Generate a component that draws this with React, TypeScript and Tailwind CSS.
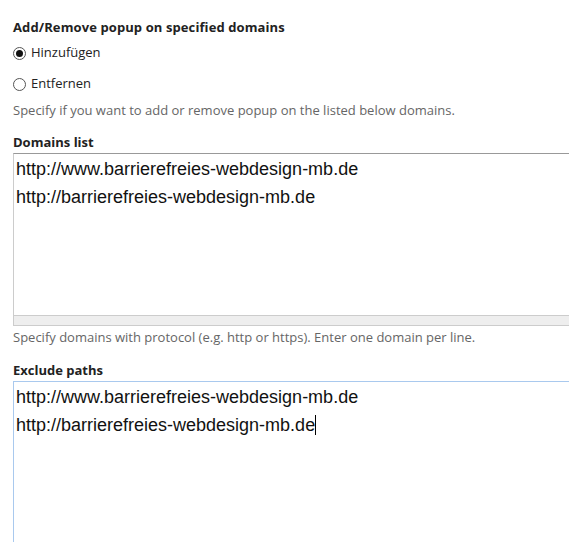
const lines = [
  "http://www.barrierefreies-webdesign-mb.de",
  "http://barrierefreies-webdesign-mb.de",
];

const Radio = ({ label, checked }: { label: string; checked?: boolean }) => {
  return (
    <label className="flex items-center gap-[5px] h-[18px]">
      <span className="w-[13px] h-[13px] rounded-full border border-[#555] bg-white flex items-center justify-center">
        {checked && <span className="w-[7px] h-[7px] rounded-full bg-[#111]" />}
      </span>
      <span className="text-[13px] text-[#222]">{label}</span>
    </label>
  );
};

const App = () => {
  return (
    <div
      className="w-[569px] h-[542px] overflow-hidden bg-white px-[13px]"
      style={{ fontFamily: '"Open Sans", "Noto Sans", sans-serif' }}
    >
      {/* popup domains */}
      <div className="pt-[18px] flex flex-col items-start">
        <h3 className="text-[13px] leading-[18px] font-bold text-[#222] tracking-[0.1px]">
          Add/Remove popup on specified domains
        </h3>
        <div className="mt-[8px] flex flex-col gap-[13px]">
          <Radio label="Hinzufügen" checked />
          <Radio label="Entfernen" />
        </div>
        <p className="mt-[8px] text-[13px] leading-[18px] text-[#666]">
          Specify if you want to add or remove popup on the listed below domains.
        </p>
      </div>

      {/* domains list */}
      <div className="mt-[14px] flex flex-col">
        <span className="text-[13px] leading-[18px] font-bold text-[#222]">Domains list</span>
        <div className="mt-[2px] w-[600px] border border-[#ccc] border-t-[#999]">
          <div
            className="h-[161px] px-[2px] pt-[1px] text-[18px] leading-[28px] text-[#111]"
            style={{ fontFamily: '"Liberation Sans", Arial, sans-serif' }}
          >
            {lines.map((l) => (
              <div key={l}>{l}</div>
            ))}
          </div>
          <div className="h-[10px] bg-[#eee] border-t border-[#ccc]" />
        </div>
        <p className="mt-[2px] text-[13px] leading-[18px] text-[#666]">
          Specify domains with protocol (e.g. http or https). Enter one domain per line.
        </p>
      </div>

      {/* exclude paths */}
      <div className="mt-[15px] flex flex-col">
        <span className="text-[13px] leading-[18px] font-bold text-[#222]">Exclude paths</span>
        <div className="mt-[2px] w-[600px] h-[200px] border border-[#a9c9ee]">
          <div
            className="px-[2px] pt-[1px] text-[18px] leading-[28px] text-[#111]"
            style={{ fontFamily: '"Liberation Sans", Arial, sans-serif' }}
          >
            <div>{lines[0]}</div>
            <div className="flex items-center">
              {lines[1]}
              <span className="inline-block w-px h-[20px] bg-black" />
            </div>
          </div>
        </div>
      </div>
    </div>
  );
};

export default App;
